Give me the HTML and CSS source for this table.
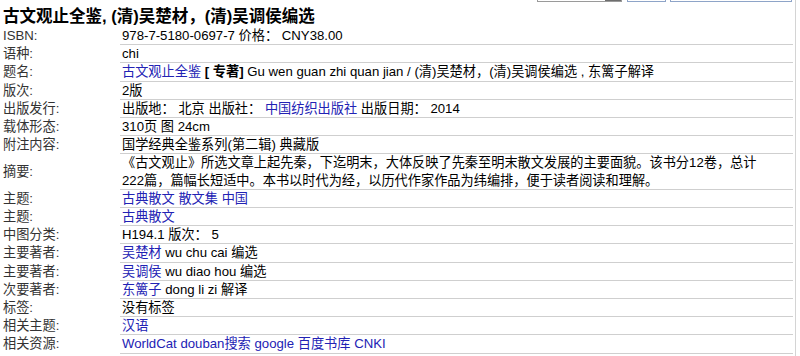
FILE: index.html
```html
<!DOCTYPE html>
<html lang="zh-CN">
<head>
<meta charset="utf-8">
<title>古文观止全鉴</title>
<link rel="stylesheet" href="styles.css">
</head>
<body>
<div class="page">
  <div class="topbar">
    <div class="box select"><span class="arrow"></span></div>
    <div class="box btn-small"></div>
    <div class="box btn-wide"></div>
  </div>
  <h1 class="title">古文观止全鉴, (清)吴楚材，(清)吴调侯编选</h1>
  <table class="detail">
    <tr><th>ISBN:</th><td>978-7-5180-0697-7 价格： CNY38.00</td></tr>
    <tr><th>语种:</th><td>chi</td></tr>
    <tr><th>题名:</th><td><a href="#">古文观止全鉴</a> <b>[ 专著]</b> Gu wen guan zhi quan jian / (清)吴楚材，(清)吴调侯编选 , 东篱子解译</td></tr>
    <tr><th>版次:</th><td>2版</td></tr>
    <tr><th>出版发行:</th><td>出版地： 北京 出版社： <a href="#">中国纺织出版社</a> 出版日期： 2014</td></tr>
    <tr><th>载体形态:</th><td>310页 图 24cm</td></tr>
    <tr><th>附注内容:</th><td>国学经典全鉴系列(第二辑) 典藏版</td></tr>
    <tr><th>摘要:</th><td>《古文观止》所选文章上起先秦，下迄明末，大体反映了先秦至明末散文发展的主要面貌。该书分12卷，总计<br>222篇，篇幅长短适中。本书以时代为经，以历代作家作品为纬编排，便于读者阅读和理解。</td></tr>
    <tr><th>主题:</th><td><a href="#">古典散文</a> <a href="#">散文集</a> <a href="#">中国</a></td></tr>
    <tr><th>主题:</th><td><a href="#">古典散文</a></td></tr>
    <tr><th>中图分类:</th><td>H194.1 版次： 5</td></tr>
    <tr><th>主要著者:</th><td><a href="#">吴楚材</a> wu chu cai 编选</td></tr>
    <tr><th>主要著者:</th><td><a href="#">吴调侯</a> wu diao hou 编选</td></tr>
    <tr><th>次要著者:</th><td><a href="#">东篱子</a> dong li zi 解译</td></tr>
    <tr><th>标签:</th><td>没有标签</td></tr>
    <tr><th>相关主题:</th><td><a href="#">汉语</a></td></tr>
    <tr><th>相关资源:</th><td><a href="#">WorldCat</a> <a href="#">douban搜索</a> <a href="#">google</a> <a href="#">百度书库</a> <a href="#">CNKI</a></td></tr>
  </table>
</div>
</body>
</html>
```

FILE: styles.css
```css
html, body {
  margin: 0;
  padding: 0;
  background: #fff;
}

body {
  font-family: "Liberation Sans", "Noto Sans CJK SC", sans-serif;
  font-size: 13.2px;
  color: #000;
}

.page {
  width: 795px;
  height: 356px;
  border-right: 1px solid #d4d4d4;
  overflow: hidden;
}

.topbar {
  display: flex;
  justify-content: flex-end;
  height: 2px;
  padding-right: 3px;
}

.box {
  height: 1px;
  border: 1px solid #9a9a9a;
  border-top: none;
  box-sizing: content-box;
}

.select {
  width: 83px;
  display: flex;
  justify-content: flex-end;
  margin-right: 5px;
}

.select .arrow {
  display: block;
  width: 16px;
  height: 1px;
  background: #6e6e6e;
}

.btn-small {
  width: 37px;
  border-color: #8ea4c8;
  margin-right: 4px;
}

.btn-wide {
  width: 120px;
  border-color: #8ea4c8;
}

.title {
  margin: 0;
  padding: 4px 3px 1px;
  font-size: 16.5px;
  font-weight: bold;
  line-height: 20px;
  color: #000;
}

.detail {
  border-collapse: collapse;
  border-spacing: 0;
  width: 793px;
}

.detail th {
  width: 117px;
  padding: 0 0 0 3px;
  text-align: left;
  font-weight: normal;
  color: #333;
  line-height: 17.2px;
  vertical-align: middle;
  white-space: nowrap;
}

.detail td {
  padding: 0 0 0 2px;
  line-height: 17.2px;
  border-bottom: 1px solid #cfcfcf;
  white-space: nowrap;
}

.detail a {
  color: #2222b4;
  text-decoration: none;
}

.detail b {
  font-weight: bold;
}
```
